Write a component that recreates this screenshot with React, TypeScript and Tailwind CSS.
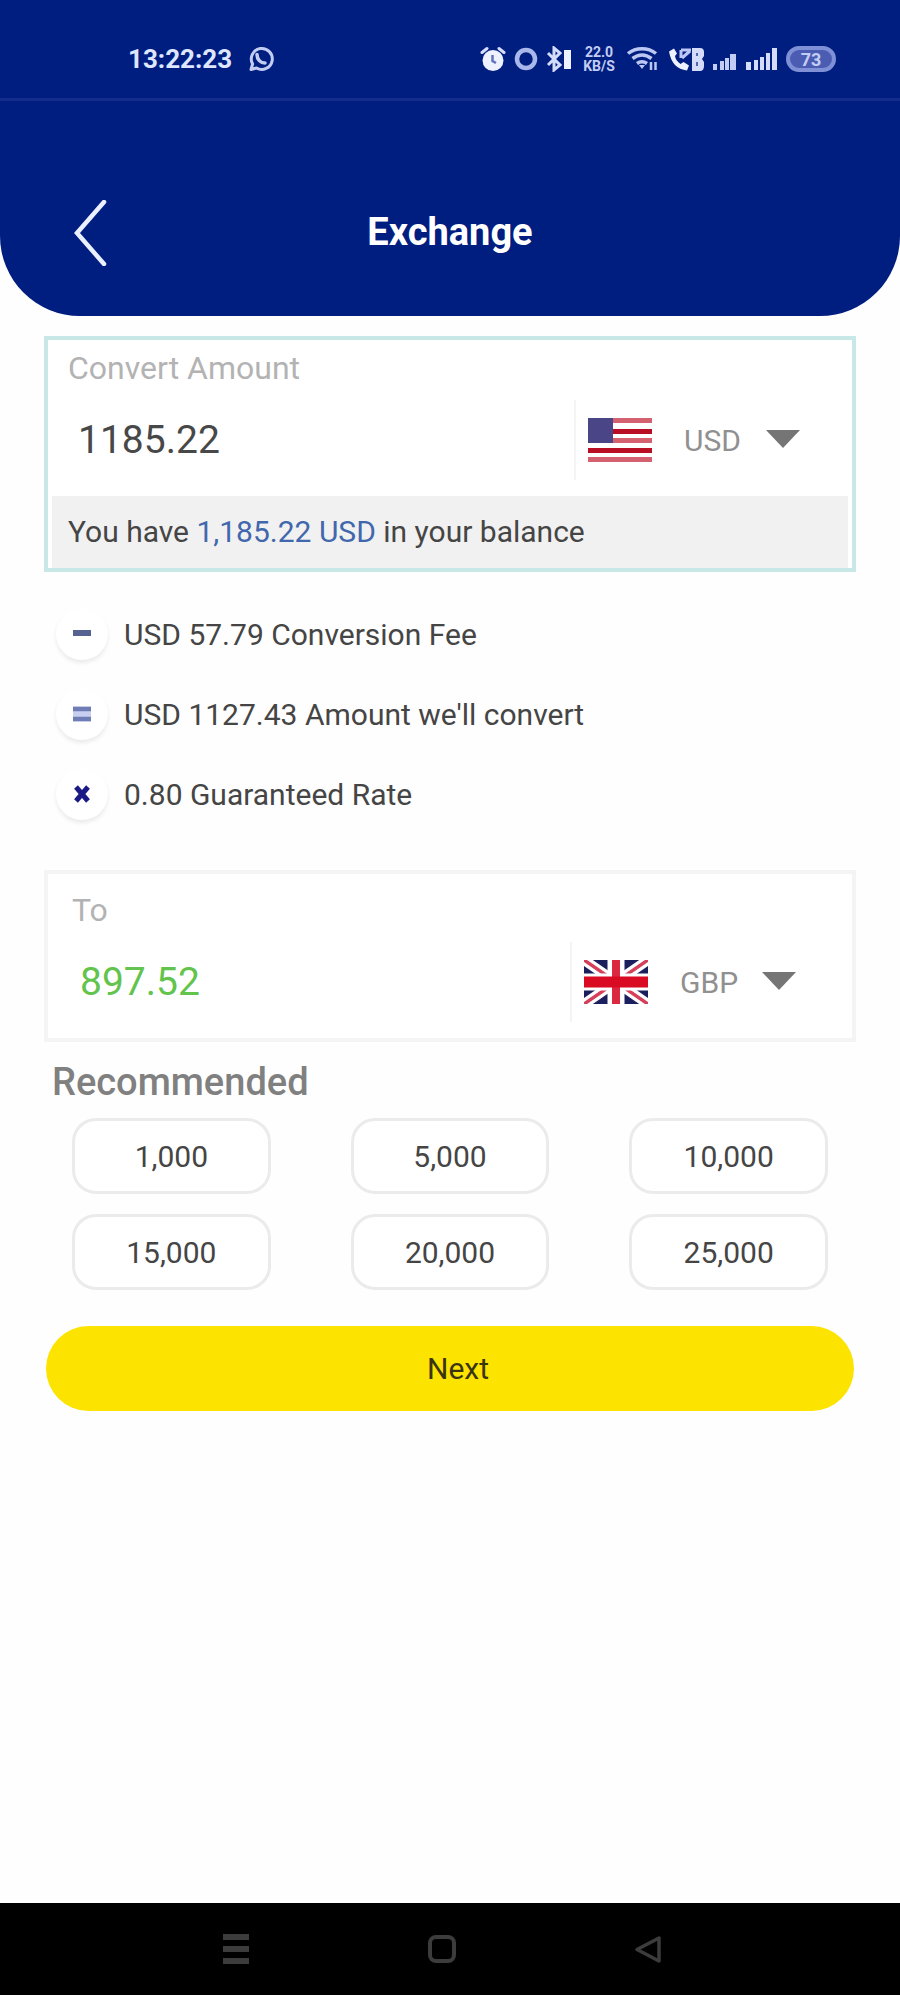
import React from "react";

const recommended = ["1,000", "5,000", "10,000", "15,000", "20,000", "25,000"];

function WhatsAppIcon() {
  return (
    <svg viewBox="0 0 26 26" className="size-[26px]" fill="none" stroke="#c3cdf3" strokeWidth="3" aria-hidden="true">
      <path d="M3 23.500l1.600-5.500A10.500 10.500 0 1 1 8.500 22z" strokeLinejoin="round" />
      <path d="M9 8.500c0 5 3.500 8.500 8 8.500" strokeWidth="3.500" strokeLinecap="round" />
    </svg>
  );
}

function AlarmIcon() {
  return (
    <svg viewBox="0 0 26 26" className="size-[26px]" aria-hidden="true">
      <circle cx="13" cy="14.500" r="10.500" fill="#eef1ff" />
      <path d="M2 6.500l5-4M24 6.500l-5-4" stroke="#d5dcfa" strokeWidth="3" strokeLinecap="round" />
      <path d="M12.500 9v6l3.500 2" stroke="#6273ba" strokeWidth="2.500" fill="none" />
    </svg>
  );
}

function RingIcon() {
  return (
    <svg viewBox="0 0 26 26" className="size-[26px]" fill="none" stroke="#a9b7ea" aria-hidden="true">
      <circle cx="13" cy="13" r="9" strokeWidth="4.500" />
    </svg>
  );
}

function BluetoothIcon() {
  return (
    <svg viewBox="0 0 26 26" className="size-[26px]" fill="none" stroke="#d5dcfa" strokeWidth="3" aria-hidden="true">
      <path d="M2 7l12 12-6 5V2l6 5L2 19" />
      <rect x="18" y="4" width="7" height="19" fill="#eef1ff" stroke="none" />
    </svg>
  );
}

function WifiIcon() {
  return (
    <svg viewBox="0 0 34 28" className="h-7 w-[34px]" fill="none" stroke="#bcc8f3" strokeWidth="3.500" aria-hidden="true">
      <path d="M2 8.500c8-6.500 20-6.500 28 0M6.500 13.500c6-4.500 13-4.500 19 0M11 18.500c3.500-2.500 6.500-2.500 10 0" />
      <path d="M13 20h6l-3 4z" fill="#bcc8f3" stroke="none" />
      <path d="M25 17v8M29.500 17v8" strokeWidth="2.500" />
    </svg>
  );
}

function CallIcon() {
  return (
    <svg viewBox="0 0 38 26" className="h-[26px] w-[38px]" aria-hidden="true">
      <path
        d="M2 5.500C4 17 10 23.500 20 24.500l2-5-5.500-3.500-3 2C10 15.500 8.500 13 8 10l2-2.500L7 2.500z"
        fill="#eef1ff"
      />
      <path d="M14 4h10M14 4v8M15 12l8-7" stroke="#bcc8f3" strokeWidth="3" fill="none" />
      <path d="M25 2h8q4 0 4 4v4l-2 3 2 3v4q0 5-4 5h-8z" fill="#d5dcfa" />
      <path d="M30 7v3M30 16v4" stroke="#5265b3" strokeWidth="2" />
    </svg>
  );
}

function SmallSignalIcon() {
  return (
    <svg viewBox="0 0 26 26" className="size-[26px]" fill="#c3cdf3" aria-hidden="true">
      <path d="M1 18h4v6H1zM8 15h4v9H8zM13 12h4v12h-4zM18 8h6v16h-6z" />
    </svg>
  );
}

function SignalIcon() {
  return (
    <svg viewBox="0 0 34 26" className="h-[26px] w-[34px]" fill="#d5dcfa" aria-hidden="true">
      <path d="M1 16h5v8H1zM9 14h4v10H9zM15 11h4v13h-4zM21 7h4v17h-4zM27 2h5v22h-5z" />
    </svg>
  );
}

function UsFlag() {
  return (
    <svg viewBox="0 0 64 44" className="h-11 w-16 shrink-0" aria-hidden="true">
      <path fill="#fff" d="M0 0h64v44H0z" />
      <path fill="#d4616f" d="M0 0h64v5H0zM0 20h64v5H0zM0 39h64v5H0z" />
      <path fill="#b80f25" d="M0 11h64v5H0zM0 30h64v5H0z" />
      <path fill="#4a4587" d="M0 0h25v25H0z" />
    </svg>
  );
}

function UkFlag() {
  return (
    <svg viewBox="0 0 64 44" className="h-11 w-16 shrink-0" aria-hidden="true">
      <path fill="#1b1f5e" d="M0 0h64v44H0z" />
      <path d="M0 0l64 44M64 0L0 44" stroke="#fff" strokeWidth="10" />
      <path d="M0 0l64 44M64 0L0 44" stroke="#d4405a" strokeWidth="3.500" />
      <path d="M32 0v44M0 22h64" stroke="#fff" strokeWidth="17" />
      <path d="M32 0v44" stroke="#dc2740" strokeWidth="8" />
      <path d="M0 22h64" stroke="#d80b22" strokeWidth="11" />
    </svg>
  );
}

function CurrencyPicker({ label, code, flag }: { label: string; code: string; flag: React.ReactNode }) {
  return (
    <div className="flex h-20 items-center border-l-2 border-[#f4f4f4] pl-3">
      {flag}
      <div className="relative ml-7">
        <select
          aria-label={label}
          defaultValue={code}
          className="w-32 appearance-none bg-transparent pl-1 text-[30px] leading-10 text-[#909090] outline-none"
        >
          <option>USD</option>
          <option>GBP</option>
        </select>
        <svg viewBox="0 0 34 18" className="pointer-events-none absolute top-3 right-2 h-[18px] w-[34px]" aria-hidden="true">
          <path d="M0 0h34L17 18z" fill="#757575" />
        </svg>
      </div>
    </div>
  );
}

function Step({ sign, children }: { sign: "minus" | "equals" | "times"; children: React.ReactNode }) {
  return (
    <li className="flex h-20 items-center gap-4">
      <span className="flex size-[52px] items-center justify-center rounded-full bg-white shadow-[0_3px_4px_rgba(0,0,0,0.08)]">
        <svg viewBox="0 0 20 20" className="size-5" aria-hidden="true">
          {sign === "minus" && <path d="M1 9h18" stroke="#566390" strokeWidth="6" />}
          {sign === "equals" && (
            <>
              <path d="M1 2.500h18v15H1z" fill="#c9cff0" />
              <path d="M1 5h18M1 15h18" stroke="#6f7db5" strokeWidth="4.500" />
            </>
          )}
          {sign === "times" && <path d="M4 3l12 14M16 3L4 17" stroke="#1a1a86" strokeWidth="5" />}
        </svg>
      </span>
      <span>{children}</span>
    </li>
  );
}

export default function App() {
  return (
    <div className="flex min-h-screen flex-col bg-[#fefefe] font-[Roboto,sans-serif] text-[30px] text-[#454545]">
      <header className="rounded-b-[80px] bg-[#001e80] text-white">
        <div className="flex h-[101px] items-center justify-between border-b-3 border-[#142c8c] pt-5 pr-16 pl-32">
          <div className="flex items-center gap-4 text-[26px] font-bold text-[#dfe6ff]">
            <time>13:22:23</time>
            <WhatsAppIcon />
          </div>
          <div className="flex items-center gap-[7px]">
            <AlarmIcon />
            <RingIcon />
            <BluetoothIcon />
            <span className="flex w-10 flex-col text-center text-[14px] leading-[14px] font-bold text-[#c3cdf3]">
              <span>22.0</span>
              <span>KB/S</span>
            </span>
            <WifiIcon />
            <CallIcon />
            <SmallSignalIcon />
            <SignalIcon />
            <span className="flex h-[26px] w-[50px] items-center justify-center rounded-full border-4 border-[#7f90d6] bg-[#4a5db3] text-[18px] font-bold text-[#c3cdf3]">
              73
            </span>
          </div>
        </div>
        <div className="grid h-[215px] grid-cols-[1fr_auto_1fr] items-center px-16 pt-12">
          <button type="button" aria-label="Back" className="justify-self-start p-2">
            <svg viewBox="0 0 36 66" className="h-[66px] w-9" fill="none" stroke="#eaf0ff" strokeWidth="4.500" aria-hidden="true">
              <path d="M32 2L5 33l27 31" strokeLinecap="round" />
            </svg>
          </button>
          <h1 className="text-[38px] font-bold">Exchange</h1>
        </div>
      </header>

      <main className="flex flex-col px-11 pt-5">
        <section className="border-4 border-[#c8e7e7] bg-white">
          <div className="pt-2 pr-11 pl-5">
            <label htmlFor="amount" className="block text-[32px] leading-10 text-[#b3b3b3]">
              Convert Amount
            </label>
            <div className="flex items-center justify-between pt-3 pb-4">
              <input
                id="amount"
                defaultValue="1185.22"
                className="w-0 flex-1 bg-transparent pl-[10px] text-[39px] leading-12 text-[#484848] outline-none"
              />
              <CurrencyPicker label="From currency" code="USD" flag={<UsFlag />} />
            </div>
          </div>
          <p className="mx-1 bg-[#f1f1f1] px-4 py-4 leading-10">
            You have <span className="text-[#4167ad]">1,185.22 USD</span> in your balance
          </p>
        </section>

        <ul className="flex flex-col pt-[22px] pl-3">
          <Step sign="minus">USD 57.79 Conversion Fee</Step>
          <Step sign="equals">USD 1127.43 Amount we'll convert</Step>
          <Step sign="times">0.80 Guaranteed Rate</Step>
        </ul>

        <section className="mt-9 border-4 border-[#f4f4f4] bg-white pt-4 pr-12 pl-6">
          <label htmlFor="result" className="block text-[32px] leading-10 text-[#b3b3b3]">
            To
          </label>
          <div className="flex items-center justify-between pt-3 pb-4">
            <output id="result" className="pl-2 text-[39px] leading-12 text-[#62c44c]">
              897.52
            </output>
            <CurrencyPicker label="To currency" code="GBP" flag={<UkFlag />} />
          </div>
        </section>

        <h2 className="mt-4 pl-2 text-[38px] leading-12 font-medium text-[#808080]">Recommended</h2>
        <div className="mt-3 grid grid-cols-3 gap-x-20 gap-y-5 px-7">
          {recommended.map((value) => (
            <button
              key={value}
              type="button"
              className="h-[76px] rounded-3xl border-3 border-[#ebebeb] bg-white text-[#454545]"
            >
              {value}
            </button>
          ))}
        </div>
        <button type="button" className="mx-0.5 mt-9 h-[85px] rounded-full bg-[#fde300] pl-4 text-[#3a3510]">
          Next
        </button>
      </main>

      <nav className="mt-auto flex h-[92px] items-center justify-center gap-44 bg-black pr-4 text-[#3c3c3c]">
        <button type="button" aria-label="Recent apps">
          <svg viewBox="0 0 30 30" className="size-[30px]" fill="currentColor" aria-hidden="true">
            <path d="M2 0h26v6H2zM2 12h26v6H2zM2 24h26v6H2z" />
          </svg>
        </button>
        <button type="button" aria-label="Home">
          <svg viewBox="0 0 30 30" className="size-[30px]" fill="none" stroke="currentColor" strokeWidth="4" aria-hidden="true">
            <rect x="3" y="3" width="24" height="24" rx="6" />
          </svg>
        </button>
        <button type="button" aria-label="Back to previous app">
          <svg viewBox="0 0 30 30" className="size-[30px]" fill="none" stroke="currentColor" strokeWidth="3.500" aria-hidden="true">
            <path d="M26 4v23L4 15.500z" strokeLinejoin="round" />
          </svg>
        </button>
      </nav>
    </div>
  );
}
